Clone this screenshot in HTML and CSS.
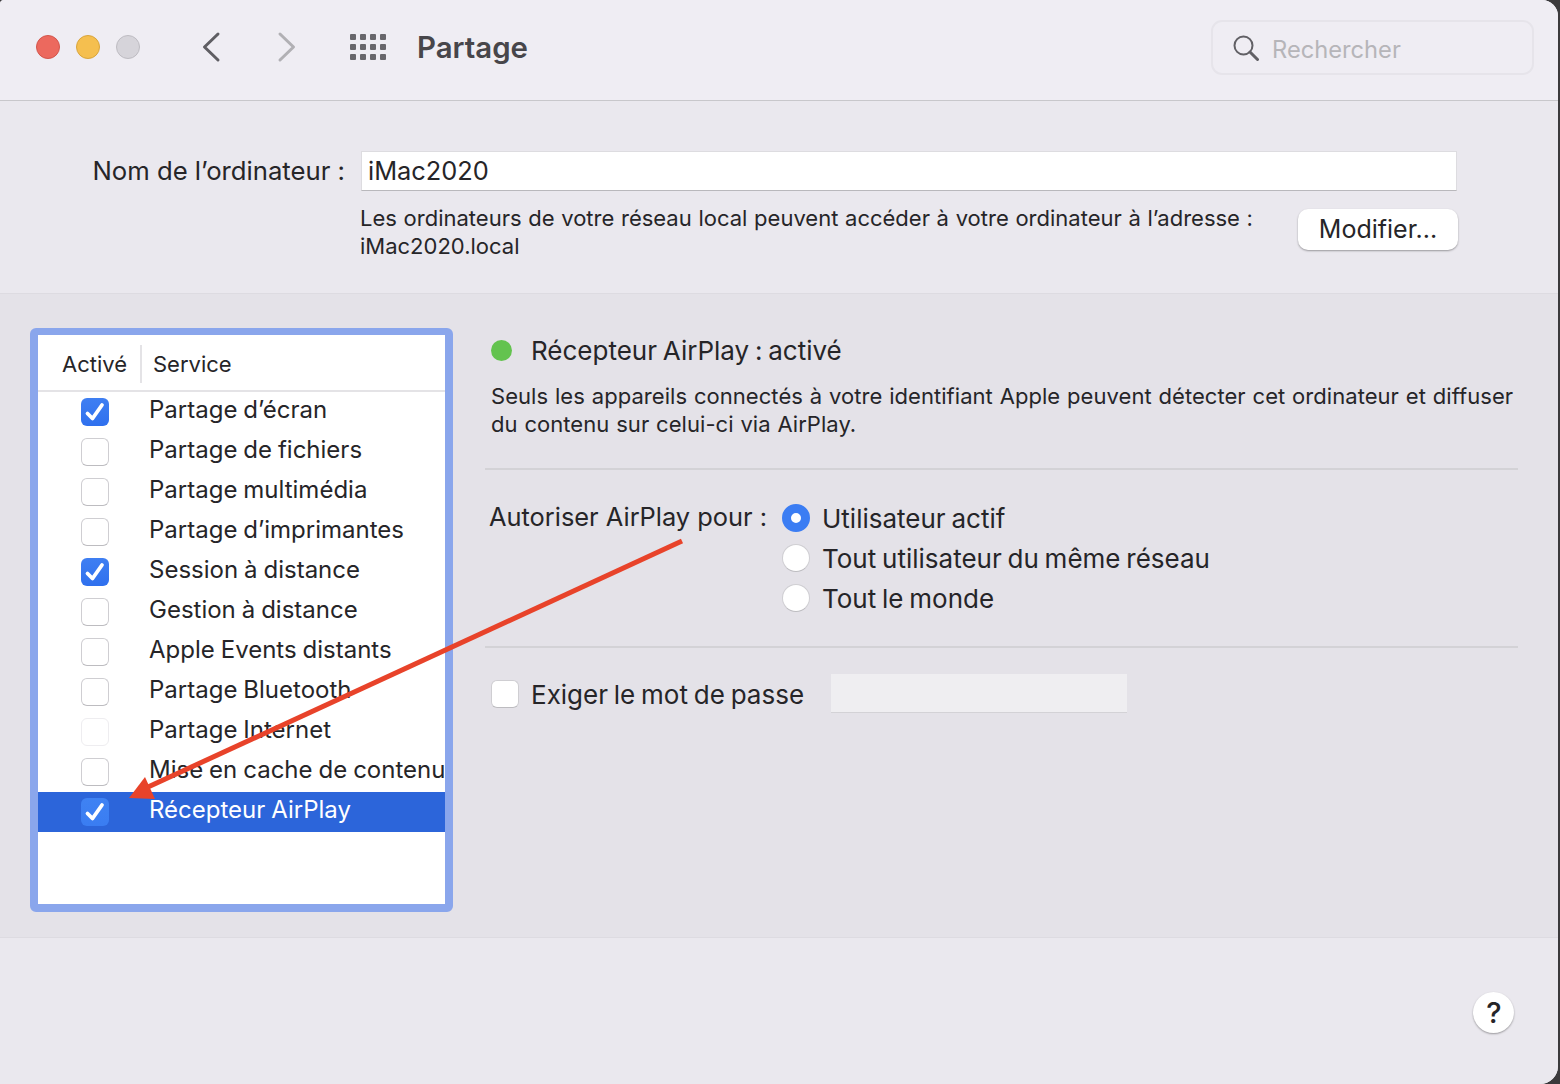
FILE: index.html
```html
<!DOCTYPE html>
<html lang="fr">
<head>
    <meta charset="UTF-8">
    <meta name="viewport" content="width=device-width, initial-scale=1.0">
    <title>Partage</title>
    <link rel="stylesheet" href="styles.css">
</head>
<body>
    <div class="window">
        <header class="toolbar">
            <div class="lights">
                <span class="light red"></span>
                <span class="light yellow"></span>
                <span class="light grey"></span>
            </div>
            <svg class="nav-icon back" width="20" height="32" viewBox="0 0 20 32"><path d="M17 3 L3.5 16 L17 29" fill="none" stroke="#5f5e63" stroke-width="3" stroke-linecap="round" stroke-linejoin="round"/></svg>
            <svg class="nav-icon forward" width="20" height="32" viewBox="0 0 20 32"><path d="M3 3 L16.5 16 L3 29" fill="none" stroke="#b1b0b4" stroke-width="3" stroke-linecap="round" stroke-linejoin="round"/></svg>
            <div class="grid-icon">
                <i></i><i></i><i></i><i></i><i></i><i></i><i></i><i></i><i></i><i></i><i></i><i></i>
            </div>
            <h1 class="title">Partage</h1>
            <div class="search">
                <svg width="26" height="26" viewBox="0 0 26 26"><circle cx="10.5" cy="10.5" r="9" fill="none" stroke="#616065" stroke-width="2"/><path d="M17 17 L24.5 24.5" stroke="#616065" stroke-width="3" stroke-linecap="round"/></svg>
                <span class="search-text">Rechercher</span>
            </div>
        </header>

        <section class="name-section">
            <div class="name-row">
                <label class="name-label">Nom de l’ordinateur :</label>
                <div class="name-input">iMac2020</div>
            </div>
            <div class="address-row">
                <p class="address">Les ordinateurs de votre réseau local peuvent accéder à votre ordinateur à l’adresse :<br>iMac2020.local</p>
                <button class="btn-modify">Modifier...</button>
            </div>
        </section>

        <section class="panel">
            <div class="service-box">
                <div class="service-head">
                    <span class="col-active">Activé</span>
                    <span class="col-service">Service</span>
                </div>
                <ul class="service-list">
                    <li class="service"><span class="check on"><svg viewBox="0 0 28 28"><path d="M6.5 15.5 L11.5 20.5 L21 7"/></svg></span><span class="service-name">Partage d’écran</span></li>
                    <li class="service"><span class="check"></span><span class="service-name">Partage de fichiers</span></li>
                    <li class="service"><span class="check"></span><span class="service-name">Partage multimédia</span></li>
                    <li class="service"><span class="check"></span><span class="service-name">Partage d’imprimantes</span></li>
                    <li class="service"><span class="check on"><svg viewBox="0 0 28 28"><path d="M6.5 15.5 L11.5 20.5 L21 7"/></svg></span><span class="service-name">Session à distance</span></li>
                    <li class="service"><span class="check"></span><span class="service-name">Gestion à distance</span></li>
                    <li class="service"><span class="check"></span><span class="service-name">Apple Events distants</span></li>
                    <li class="service"><span class="check"></span><span class="service-name">Partage Bluetooth</span></li>
                    <li class="service"><span class="check disabled"></span><span class="service-name">Partage Internet</span></li>
                    <li class="service"><span class="check"></span><span class="service-name">Mise en cache de contenu</span></li>
                    <li class="service selected"><span class="check on"><svg viewBox="0 0 28 28"><path d="M6.5 15.5 L11.5 20.5 L21 7"/></svg></span><span class="service-name">Récepteur AirPlay</span></li>
                </ul>
            </div>

            <div class="details">
                <div class="status">
                    <span class="status-dot"></span>
                    <span>Récepteur AirPlay : activé</span>
                </div>
                <p class="status-text">Seuls les appareils connectés à votre identifiant Apple peuvent détecter cet ordinateur et diffuser du contenu sur celui-ci via AirPlay.</p>
                <div class="allow">
                    <span class="allow-label">Autoriser AirPlay pour :</span>
                    <div class="radios">
                        <div class="radio-row"><span class="radio on"></span><span>Utilisateur actif</span></div>
                        <div class="radio-row"><span class="radio"></span><span>Tout utilisateur du même réseau</span></div>
                        <div class="radio-row"><span class="radio"></span><span>Tout le monde</span></div>
                    </div>
                </div>
                <div class="password">
                    <span class="check"></span>
                    <span class="password-label">Exiger le mot de passe</span>
                    <div class="password-field"></div>
                </div>
            </div>
        </section>

        <footer class="bottom">
            <button class="help">?</button>
        </footer>

        <svg class="arrow" width="1560" height="1084" viewBox="0 0 1560 1084">
            <path d="M682 541 L148 787" stroke="#e8432a" stroke-width="5" fill="none"/>
            <path d="M129 798 L145 777 L155 799 Z" fill="#e8432a"/>
        </svg>
    </div>
</body>
</html>
```

FILE: styles.css
```css
* {
    box-sizing: border-box;
}
html, body {
    margin: 0;
    padding: 0;
}
body {
    width: 1560px;
    height: 1084px;
    overflow: hidden;
    background-color: #3b3a3c;
    font-family: Inter, "Noto Sans", sans-serif;
    color: #262528;
}
.window {
    position: relative;
    width: 1558px;
    height: 1084px;
    display: flex;
    flex-direction: column;
    background-color: #eae8ee;
    border-radius: 4px 16px 18px 0;
    overflow: hidden;
}

/* toolbar */
.toolbar {
    height: 101px;
    flex: none;
    display: flex;
    align-items: center;
    padding: 0 24px 6px 36px;
    background-color: #efedf3;
    border-bottom: 1px solid #c8c7cb;
}
.lights {
    display: flex;
    gap: 16px;
    margin-right: 61px;
}
.light {
    width: 24px;
    height: 24px;
    border-radius: 50%;
    border: 1px solid transparent;
}
.light.red {
    background-color: #ec695e;
    border-color: #d3564c;
}
.light.yellow {
    background-color: #f5bf4f;
    border-color: #d9a53c;
}
.light.grey {
    background-color: #d6d4da;
    border-color: #bebcc2;
}
.nav-icon.back {
    margin-right: 56px;
}
.nav-icon.forward {
    margin-right: 53px;
}
.grid-icon {
    display: grid;
    grid-template-columns: repeat(4, 6px);
    grid-auto-rows: 6px;
    gap: 4px;
    margin-right: 31px;
}
.grid-icon i {
    background-color: #67666b;
    border-radius: 1px;
}
.title {
    margin: 0;
    font-size: 29.4px;
    font-weight: 600;
    color: #47464a;
}
.search {
    margin-left: auto;
    width: 323px;
    height: 55px;
    display: flex;
    align-items: center;
    gap: 13px;
    padding-left: 20px;
    margin-top: 1px;
    border: 2px solid #e6e4ea;
    border-radius: 11px;
    font-size: 23.7px;
    color: #b6b5b9;
}
.search-text {
    padding-top: 4px;
}

/* name section */
.name-section {
    height: 192px;
    flex: none;
    padding-top: 50px;
    background-color: #eae8ee;
}
.name-row {
    display: flex;
    align-items: center;
    height: 40px;
}
.name-label {
    width: 346px;
    padding: 0 1px 2px 0;
    text-align: right;
    font-size: 25.7px;
}
.name-input {
    width: 1096px;
    height: 40px;
    margin-left: 15px;
    padding-left: 6px;
    background-color: #fff;
    border: 1px solid #dddce0;
    border-bottom: 1px solid #b9b8bc;
    font-size: 25.4px;
    line-height: 38px;
}
.address-row {
    display: flex;
    align-items: flex-start;
    margin-top: 13px;
    padding-left: 360px;
}
.address {
    margin: 0;
    width: 938px;
    font-size: 22px;
    line-height: 28px;
    word-spacing: 0.5px;
}
.btn-modify {
    width: 160px;
    height: 41px;
    margin-top: 5px;
    background-color: #fff;
    border: none;
    border-radius: 10px;
    box-shadow: 0 1px 2px rgba(0, 0, 0, 0.35);
    font-family: inherit;
    font-size: 25px;
    color: #262528;
    padding: 0 0 2px 0;
}

/* main panel */
.panel {
    height: 645px;
    flex: none;
    display: flex;
    padding: 34px 40px 0 30px;
    background-color: #e4e2e8;
    border-top: 1px solid #dddbe1;
    border-bottom: 1px solid #dddbe1;
}
.service-box {
    width: 423px;
    height: 584px;
    flex: none;
    background-color: #fff;
    border: 8px solid #8aa6ec;
    border-top-width: 7px;
    border-radius: 6px;
}
.service-head {
    height: 57px;
    display: flex;
    align-items: center;
    padding: 2px 0 0 24px;
    border-bottom: 2px solid #e4e3e6;
    font-size: 22px;
}
.col-active {
    width: 80px;
    padding: 6px 0;
    border-right: 2px solid #e4e3e6;
}
.col-service {
    padding-left: 11px;
}
.service-list {
    list-style: none;
    margin: 0;
    padding: 0;
}
.service {
    height: 40px;
    display: flex;
    align-items: center;
    gap: 40px;
    padding-left: 43px;
    font-size: 24px;
    word-spacing: -0.8px;
    white-space: nowrap;
}
.service-name {
    padding-bottom: 6px;
}
.service.selected {
    background-color: #2c65da;
    color: #fff;
}
.check {
    width: 28px;
    height: 28px;
    flex: none;
    display: block;
    background-color: #fff;
    border: 1px solid #cfced2;
    border-bottom-color: #bdbcc0;
    border-radius: 6px;
}
.check.disabled {
    border-color: #eeedf0;
}
.check.on {
    border: none;
    background: linear-gradient(#3f7ff2, #2f70ee);
}
.selected .check.on {
    background: linear-gradient(#3f82f3, #3a7df2);
}
.check svg {
    display: block;
    width: 28px;
    height: 28px;
}
.check path {
    fill: none;
    stroke: #fff;
    stroke-width: 3.8;
    stroke-linecap: round;
    stroke-linejoin: round;
}

/* right side */
.details {
    flex: 1;
    padding: 0 0 0 32px;
}
.status {
    display: flex;
    align-items: center;
    gap: 19px;
    height: 44px;
    margin-left: 6px;
    font-size: 26px;
    word-spacing: -1.5px;
}
.status-dot {
    width: 21px;
    height: 21px;
    border-radius: 50%;
    background-color: #63c34f;
}
.status-text {
    margin: 10px 0 0 6px;
    padding-bottom: 30px;
    width: 1040px;
    font-size: 22px;
    line-height: 28px;
    letter-spacing: 0.05px;
    word-spacing: 0.6px;
}
.allow {
    display: flex;
    border-top: 2px solid #d3d2d6;
    border-bottom: 2px solid #d3d2d6;
    height: 180px;
    padding-top: 30px;
    padding-left: 4px;
    width: 1033px;
}
.allow-label {
    width: 293px;
    font-size: 25.4px;
    line-height: 34px;
}
.radios {
    margin-top: -2px;
}
.radio-row {
    height: 40px;
    display: flex;
    align-items: center;
    gap: 12px;
    font-size: 26px;
    word-spacing: -1.5px;
}
.radio {
    width: 28px;
    height: 28px;
    border-radius: 50%;
    background-color: #fff;
    border: 1px solid #cfced2;
    border-bottom-color: #bdbcc0;
}
.radio.on {
    border: 9px solid #3b7df3;
}
.password {
    display: flex;
    align-items: center;
    height: 39px;
    margin-top: 26px;
    margin-left: 6px;
}
.password-label {
    margin-left: 12px;
    padding-top: 1px;
    font-size: 26px;
    word-spacing: -1.5px;
}
.password-field {
    width: 296px;
    height: 39px;
    margin-left: 27px;
    background-color: #efeef1;
    border-bottom: 1px solid #d3d2d6;
}

/* footer */
.bottom {
    flex: 1;
    display: flex;
    justify-content: flex-end;
    padding: 54px 44px 0 0;
    background-color: #eae8ee;
}
.help {
    width: 41px;
    height: 41px;
    padding: 0 0 0 1px;
    border: none;
    border-radius: 50%;
    background-color: #fff;
    box-shadow: 0 1px 2px rgba(0, 0, 0, 0.35);
    font-family: inherit;
    font-size: 29px;
    font-weight: 500;
    color: #262528;
}

/* annotation drawn over the window */
.arrow {
    position: absolute;
    left: 0;
    top: 0;
    pointer-events: none;
}
```
